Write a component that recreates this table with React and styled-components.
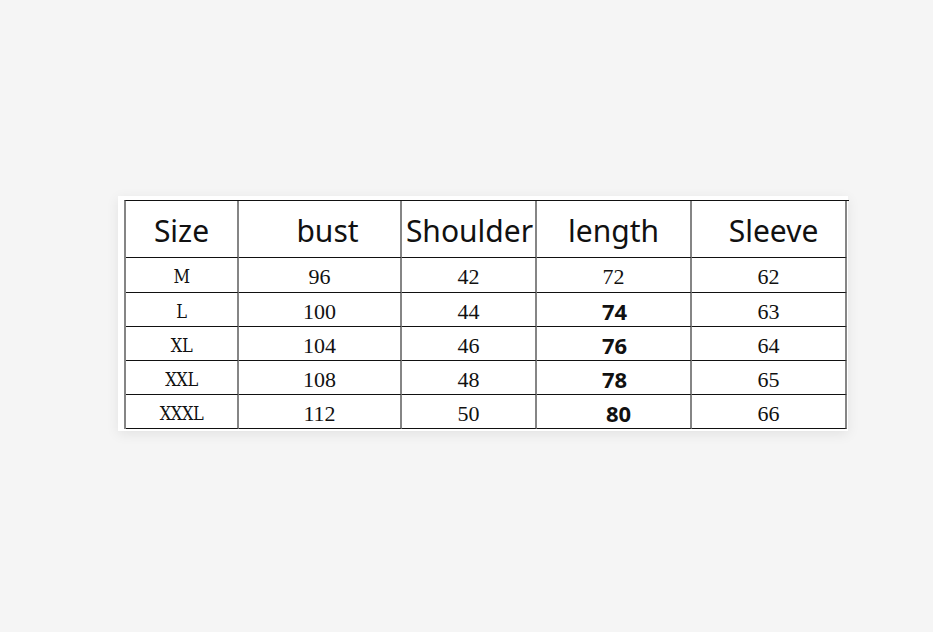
import React from "react";
import styled, { createGlobalStyle } from "styled-components";

const Global = createGlobalStyle`
  html, body {
    margin: 0;
    padding: 0;
    background: #f5f5f5;
  }
  body {
    font-family: "Noto Sans", "Liberation Sans", sans-serif;
  }
`;

const Page = styled.div`
  width: 933px;
  height: 632px;
  box-sizing: border-box;
  padding: 196px 0 0 118px;
`;

const Panel = styled.div`
  width: 730px;
  box-sizing: border-box;
  padding: 4px 2px 2px 6px;
  background: #ffffff;
  box-shadow: 0 3px 12px rgba(0, 0, 0, 0.08);
`;

const Grid = styled.div`
  display: grid;
  grid-template-columns: 113px 163px 135px 155px 155px;
  grid-template-rows: 57px 35px 34px 34px 34px 34px;
  width: 723px;
  border-left: 2px solid #858585;
  border-top: 1px solid #111;
`;

const Cell = styled.div`
  box-sizing: border-box;
  border-right: 2px solid #858585;
  border-bottom: 1px solid #111;
  display: flex;
  align-items: center;
  justify-content: center;
  color: #111;
  white-space: nowrap;
  overflow: visible;
  padding-left: ${(p) => (p.$shift > 0 ? p.$shift * 2 : 0)}px;
  padding-right: ${(p) => (p.$shift < 0 ? -p.$shift * 2 : 0)}px;
`;

const HeadCell = styled(Cell)`
  font-family: "Noto Sans", "Open Sans", sans-serif;
  font-size: 30px;
  font-weight: 400;
  padding-top: 3px;
`;

const SizeCell = styled(Cell)`
  font-family: "DejaVu Serif Condensed", "DejaVu Serif", serif;
  font-stretch: condensed;
  font-size: 18px;
  letter-spacing: -0.5px;
  padding-top: 3px;
`;

const NumCell = styled(Cell)`
  font-family: "Liberation Serif", "Times New Roman", serif;
  font-size: 22px;
  padding-top: 4px;
`;

const BoldCell = styled(Cell)`
  font-family: "Noto Sans", "Liberation Sans", sans-serif;
  font-size: 22px;
  font-weight: 700;
  padding-top: 3px;
`;

const headers = [
  { label: "Size", shift: 0 },
  { label: "bust", shift: 8 },
  { label: "Shoulder", shift: 1 },
  { label: "length", shift: 0 },
  { label: "Sleeve", shift: 5 },
];

const rows = [
  { size: "M", bust: "96", shoulder: "42", length: "72", bold: false, sleeve: "62" },
  { size: "L", bust: "100", shoulder: "44", length: "74", bold: true, shift: 1, sleeve: "63" },
  { size: "XL", bust: "104", shoulder: "46", length: "76", bold: true, shift: 1, sleeve: "64" },
  { size: "XXL", bust: "108", shoulder: "48", length: "78", bold: true, shift: 1, sleeve: "65" },
  { size: "XXXL", bust: "112", shoulder: "50", length: "80", bold: true, shift: 5, sleeve: "66" },
];

export default function App() {
  return (
    <>
      <Global />
      <Page>
        <Panel>
          <Grid>
            {headers.map((h) => (
              <HeadCell key={h.label} $shift={h.shift}>
                {h.label}
              </HeadCell>
            ))}
            {rows.map((r) => (
              <React.Fragment key={r.size}>
                <SizeCell $shift={0}>{r.size}</SizeCell>
                <NumCell $shift={0}>{r.bust}</NumCell>
                <NumCell $shift={0}>{r.shoulder}</NumCell>
                {r.bold ? (
                  <BoldCell $shift={r.shift}>{r.length}</BoldCell>
                ) : (
                  <NumCell $shift={0}>{r.length}</NumCell>
                )}
                <NumCell $shift={0}>{r.sleeve}</NumCell>
              </React.Fragment>
            ))}
          </Grid>
        </Panel>
      </Page>
    </>
  );
}
